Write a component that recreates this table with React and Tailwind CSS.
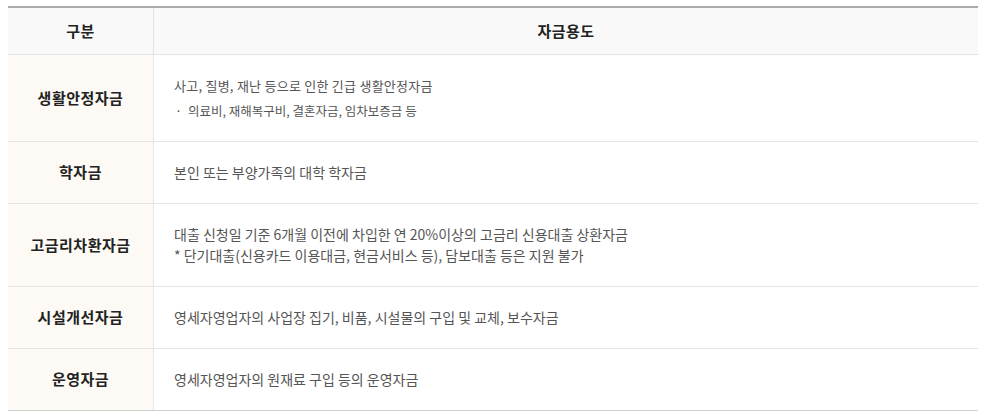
const rows = [
  {
    title: "생활안정자금",
    h: "h-[87px]",
    body: (
      <div>
        <p className="text-[13px] leading-[21px] tracking-[0.25px]">사고, 질병, 재난 등으로 인한 긴급 생활안정자금</p>
        <p className="mt-1 text-[12.5px] leading-[21px]">
          <span className="mr-[6px] ml-[1px]">·</span>의료비, 재해복구비, 결혼자금, 임차보증금 등
        </p>
      </div>
    ),
  },
  {
    title: "학자금",
    h: "h-[62px]",
    body: <p className="text-[14px] leading-[21px]">본인 또는 부양가족의 대학 학자금</p>,
  },
  {
    title: "고금리차환자금",
    h: "h-[83px]",
    body: (
      <div className="text-[14px] leading-[21px]">
        <p>대출 신청일 기준 6개월 이전에 차입한 연 20%이상의 고금리 신용대출 상환자금</p>
        <p>* 단기대출(신용카드 이용대금, 현금서비스 등), 담보대출 등은 지원 불가</p>
      </div>
    ),
  },
  {
    title: "시설개선자금",
    h: "h-[62px]",
    body: <p className="text-[14px] leading-[21px]">영세자영업자의 사업장 집기, 비품, 시설물의 구입 및 교체, 보수자금</p>,
  },
  {
    title: "운영자금",
    h: "h-[62px]",
    body: <p className="text-[14px] leading-[21px]">영세자영업자의 원재료 구입 등의 운영자금</p>,
  },
]

export default function App() {
  return (
    <div
      className="min-h-[418px] bg-white pt-[6px] pl-2 pr-[5px]"
      style={{ fontFamily: '"Noto Sans CJK KR", "Noto Sans", sans-serif' }}
    >
      <div className="border-t-2 border-[#ababab]">
        <div className="flex h-[47px] border-b border-[#e2e2e2] bg-[#f9f9f9]">
          <div className="flex w-[146px] items-center justify-center border-r border-[#e2e2e2] text-[15px] font-bold tracking-[0.5px] text-[#222]">
            구분
          </div>
          <div className="flex flex-1 items-center justify-center text-[15px] font-bold tracking-[0.5px] text-[#222]">
            자금용도
          </div>
        </div>

        {rows.map((row, i) => (
          <div
            key={row.title}
            className={
              "flex border-b " +
              row.h +
              (i === rows.length - 1 ? " border-[#d0d0d0]" : " border-[#e5e5e5]")
            }
          >
            <div className="flex w-[146px] items-center justify-center border-r border-[#e5e5e5] bg-[#fdfaf5] text-[15px] font-bold tracking-[0.5px] text-[#222]">
              {row.title}
            </div>
            <div className="flex flex-1 items-center pl-5 text-[#555]">{row.body}</div>
          </div>
        ))}
      </div>
    </div>
  )
}
